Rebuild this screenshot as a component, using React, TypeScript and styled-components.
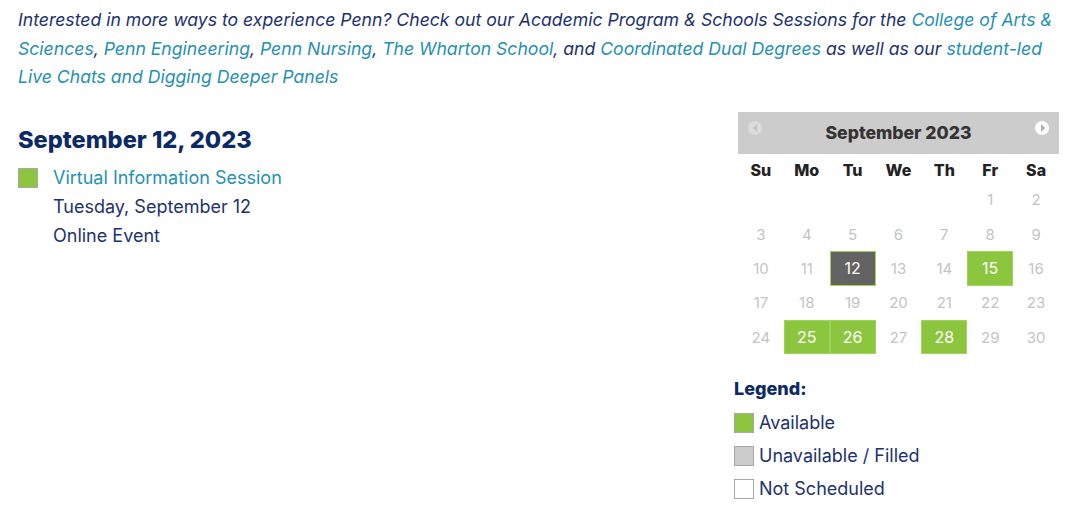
import React from 'react';
import styled, { createGlobalStyle } from 'styled-components';

const GlobalStyle = createGlobalStyle`
  html, body {
    margin: 0;
    padding: 0;
    background: #fff;
  }
  body {
    font-family: Inter, "Noto Sans", sans-serif;
    color: #1c3270;
  }
`;

type DayState = 'none' | 'available' | 'selected';

const available = [15, 25, 26, 28];
const selected = 12;

const Page = styled.div`
  padding: 6px 21px 0 18px;
`;

const Intro = styled.p`
  margin: 0;
  font-size: 17.62px;
  line-height: 28.5px;
  font-style: italic;
  color: #1c3270;
`;

const Link = styled.a`
  color: #2590b5;
  text-decoration: none;
`;

const Columns = styled.div`
  display: flex;
  justify-content: space-between;
  margin-top: 20px;
`;

const Events = styled.div`
  padding-top: 13px;
`;

const DateHeading = styled.h2`
  margin: 0 0 10px;
  font-family: Inter, sans-serif;
  font-weight: 800;
  font-size: 23.6px;
  line-height: 30px;
  color: #0b2a66;
`;

const EventRow = styled.div`
  display: flex;
  gap: 15px;
`;

const Swatch = styled.span<{ color: string }>`
  flex: none;
  width: 18px;
  height: 18px;
  background: ${({ color }) => color};
  border: 1px solid #a8a8a8;
`;

const EventSwatch = styled(Swatch)`
  margin-top: 3px;
`;

const EventText = styled.div`
  font-size: 18px;
  line-height: 29px;
  margin-top: -2px;
`;

const EventTitle = styled.div`
  color: #2590b5;
`;

const EventLine = styled.div`
  color: #1c3270;
`;

const Side = styled.div`
  width: 325px;
`;

const Calendar = styled.div`
  margin-left: 4px;
  width: 321px;
`;

const CalHeader = styled.div`
  position: relative;
  height: 42px;
  background: #cccccc;
  display: flex;
  align-items: center;
  justify-content: center;
  font-family: Inter, sans-serif;
  font-weight: 800;
  font-size: 17.6px;
  color: #333;
`;

const NavButton = styled.span<{ side: 'left' | 'right'; enabled?: boolean }>`
  position: absolute;
  top: 9px;
  ${({ side }) => (side === 'left' ? 'left: 10px;' : 'right: 10px;')}
  width: 14px;
  height: 14px;
  border-radius: 50%;
  background: ${({ enabled }) => (enabled ? '#fff' : '#dcdcdc')};
  display: flex;
  align-items: center;
  justify-content: center;
`;

const Arrow = styled.span<{ dir: 'left' | 'right'; enabled?: boolean }>`
  width: 0;
  height: 0;
  border-top: 4px solid transparent;
  border-bottom: 4px solid transparent;
  ${({ dir, enabled }) =>
    dir === 'left'
      ? `border-right: 4px solid ${enabled ? '#aaa' : '#c4c4c4'}; margin-right: 1px;`
      : `border-left: 4px solid ${enabled ? '#aaa' : '#c4c4c4'}; margin-left: 2px;`}
`;

const Grid = styled.div`
  display: grid;
  grid-template-columns: repeat(7, 1fr);
  grid-template-rows: 29px;
  grid-auto-rows: 34.4px;
`;

const WeekDay = styled.div`
  display: flex;
  align-items: center;
  justify-content: center;
  padding-top: 3px;
  font-family: Inter, sans-serif;
  font-weight: 800;
  font-size: 16px;
  color: #222;
`;

const Day = styled.div<{ state: DayState }>`
  display: flex;
  align-items: center;
  justify-content: center;
  font-family: Inter, sans-serif;
  box-sizing: border-box;
  color: ${({ state }) => (state === 'none' ? '#c4c4c4' : '#fff')};
  font-weight: 400;
  background: ${({ state }) =>
    state === 'selected' ? '#636363' : state === 'available' ? '#8cc63f' : 'transparent'};
  border: 1px solid
    ${({ state }) => (state === 'none' ? 'transparent' : '#9fd35a')};
  font-size: ${({ state }) => (state === 'none' ? '15px' : '16px')};
`;

const Legend = styled.div`
  margin-top: 23px;
`;

const LegendTitle = styled.div`
  font-family: Inter, sans-serif;
  font-weight: 800;
  font-size: 18px;
  line-height: 24px;
  color: #0b2a66;
  margin-bottom: 5px;
`;

const LegendItem = styled.div`
  display: flex;
  align-items: center;
  gap: 5px;
  height: 33px;
  font-size: 18px;
  color: #1c3270;
`;

const weekDays = ['Su', 'Mo', 'Tu', 'We', 'Th', 'Fr', 'Sa'];

const App: React.FC = () => {
  const cells: (number | null)[] = [null, null, null, null, null];
  for (let d = 1; d <= 30; d++) cells.push(d);

  const stateOf = (d: number): DayState =>
    d === selected ? 'selected' : available.includes(d) ? 'available' : 'none';

  return (
    <Page>
      <GlobalStyle />
      <Intro>
        Interested in more ways to experience Penn? Check out our Academic Program &amp; Schools
        Sessions for the <Link href="#">College of Arts &amp; Sciences</Link>,{' '}
        <Link href="#">Penn Engineering</Link>, <Link href="#">Penn Nursing</Link>,{' '}
        <Link href="#">The Wharton School</Link>, and <Link href="#">Coordinated Dual Degrees</Link>{' '}
        as well as our <Link href="#">student-led Live Chats and Digging Deeper Panels</Link>
      </Intro>
      <Columns>
        <Events>
          <DateHeading>September 12, 2023</DateHeading>
          <EventRow>
            <EventSwatch color="#8cc63f" />
            <EventText>
              <EventTitle>Virtual Information Session</EventTitle>
              <EventLine>Tuesday, September 12</EventLine>
              <EventLine>Online Event</EventLine>
            </EventText>
          </EventRow>
        </Events>
        <Side>
          <Calendar>
            <CalHeader>
              <NavButton side="left">
                <Arrow dir="left" />
              </NavButton>
              September 2023
              <NavButton side="right" enabled>
                <Arrow dir="right" enabled />
              </NavButton>
            </CalHeader>
            <Grid>
              {weekDays.map((w) => (
                <WeekDay key={w}>{w}</WeekDay>
              ))}
              {cells.map((d, i) =>
                d === null ? (
                  <Day key={`e${i}`} state="none" />
                ) : (
                  <Day key={d} state={stateOf(d)}>
                    {d}
                  </Day>
                )
              )}
            </Grid>
          </Calendar>
          <Legend>
            <LegendTitle>Legend:</LegendTitle>
            <LegendItem>
              <Swatch color="#8cc63f" />
              Available
            </LegendItem>
            <LegendItem>
              <Swatch color="#cccccc" />
              Unavailable / Filled
            </LegendItem>
            <LegendItem>
              <Swatch color="#ffffff" />
              Not Scheduled
            </LegendItem>
          </Legend>
        </Side>
      </Columns>
    </Page>
  );
};

export default App;
